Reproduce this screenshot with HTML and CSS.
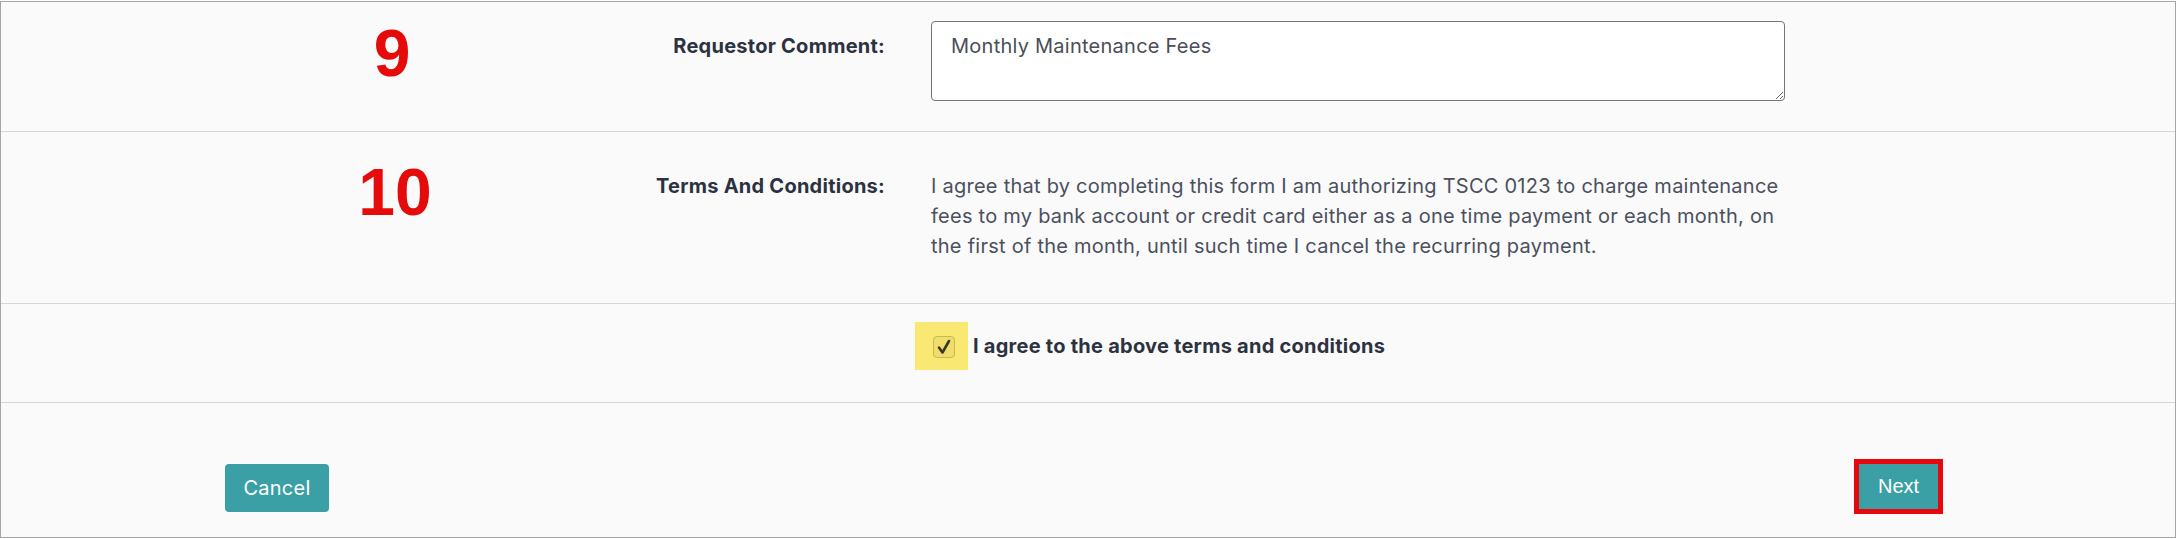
FILE: index.html
```html
<!DOCTYPE html>
<html lang="en">
<head>
<meta charset="utf-8">
<title>Payment Request</title>
<link rel="stylesheet" href="styles.css">
</head>
<body>
<div class="panel">
  <div class="row row-comment">
    <span class="marker marker-9">9</span>
    <label class="label" for="comment">Requestor Comment:</label>
    <div class="value">
      <textarea id="comment" class="comment">Monthly Maintenance Fees</textarea>
    </div>
  </div>
  <div class="row row-terms">
    <span class="marker marker-10">10</span>
    <div class="label">Terms And Conditions:</div>
    <p class="value terms-text">I agree that by completing this form I am authorizing TSCC 0123 to charge maintenance fees to my bank account or credit card either as a one time payment or each month, on the first of the month, until such time I cancel the recurring payment.</p>
  </div>
  <div class="row row-agree">
    <div class="spacer"></div>
    <label class="agree">
      <span class="highlight">
        <span class="checkbox">
          <svg viewBox="0 0 22 22" width="22" height="22"><path d="M6 11.5 L9.5 16.5 L16 5" fill="none" stroke="#3a3826" stroke-width="2.6" stroke-linecap="round" stroke-linejoin="round"/></svg>
        </span>
      </span>
      <span class="agree-text">I agree to the above terms and conditions</span>
    </label>
  </div>
  <div class="actions">
    <button class="btn btn-cancel" type="button">Cancel</button>
    <button class="btn btn-next" type="button">Next</button>
  </div>
</div>
</body>
</html>
```

FILE: styles.css
```css
* { box-sizing: border-box; }

body {
  margin: 0;
  padding-top: 1px;
  background: #ffffff;
  font-family: Inter, "Noto Sans", "Liberation Sans", sans-serif;
  font-size: 20px;
  line-height: 30px;
  letter-spacing: 0.25px;
  color: #4a505e;
}

.panel {
  width: 2176px;
  border: 1px solid #a5a5a5;
  background: #fafafa;
}

.row {
  position: relative;
  display: grid;
  grid-template-columns: 884px 854px;
  column-gap: 46px;
  border-bottom: 1px solid #d6d6d6;
}

.label {
  text-align: right;
  font-weight: 700;
  color: #2c3240;
  white-space: nowrap;
}

.marker {
  position: absolute;
  width: 200px;
  text-align: center;
  font-family: "Liberation Sans", Arial, sans-serif;
  font-weight: 700;
  font-size: 66px;
  line-height: 66px;
  letter-spacing: 0;
  color: #e60b0b;
}

.marker-9 { left: 291px; top: 18px; }
.marker-10 { left: 294px; top: 27px; }

.row-comment {
  padding: 19px 0 30px;
}

.row-comment .label {
  padding-top: 10px;
}

.comment {
  display: block;
  width: 854px;
  height: 80px;
  margin: 0;
  padding: 9px 19px;
  border: 1px solid #767676;
  border-radius: 4px;
  background: #ffffff;
  font-family: inherit;
  font-size: 20px;
  line-height: 30px;
  letter-spacing: inherit;
  color: #4a4e58;
}

.row-terms {
  padding: 39px 0 42px;
}

.terms-text {
  margin: 0;
}

.row-agree {
  padding: 18px 0 32px;
  align-items: center;
}

.agree {
  display: flex;
  align-items: center;
  gap: 5px;
  margin-left: -16px;
  font-weight: 700;
  color: #2c3240;
  white-space: nowrap;
}

.highlight {
  display: flex;
  width: 53px;
  height: 48px;
  padding: 14px 0 0 18px;
  background: #f9e872;
}

.checkbox {
  display: block;
  width: 22px;
  height: 22px;
  border: 1.5px solid #c9b85a;
  border-radius: 4px;
  background: #f0dd6c;
}

.checkbox svg {
  display: block;
  margin: -1.5px 0 0 -1.5px;
}

.actions {
  display: flex;
  justify-content: space-between;
  align-items: flex-start;
  padding: 56px 232px 23px 224px;
}

.btn {
  margin: 0;
  border: 0;
  background: #3aa0a6;
  color: #ffffff;
  font-size: 20px;
  cursor: pointer;
}

.btn-cancel {
  width: 104px;
  height: 48px;
  margin-top: 5px;
  border-radius: 4px;
  font-family: inherit;
  letter-spacing: inherit;
}

.btn-next {
  width: 89px;
  height: 55px;
  border: 5px solid #e8070c;
  font-family: "Liberation Sans", Arial, sans-serif;
  letter-spacing: 0;
}
```
